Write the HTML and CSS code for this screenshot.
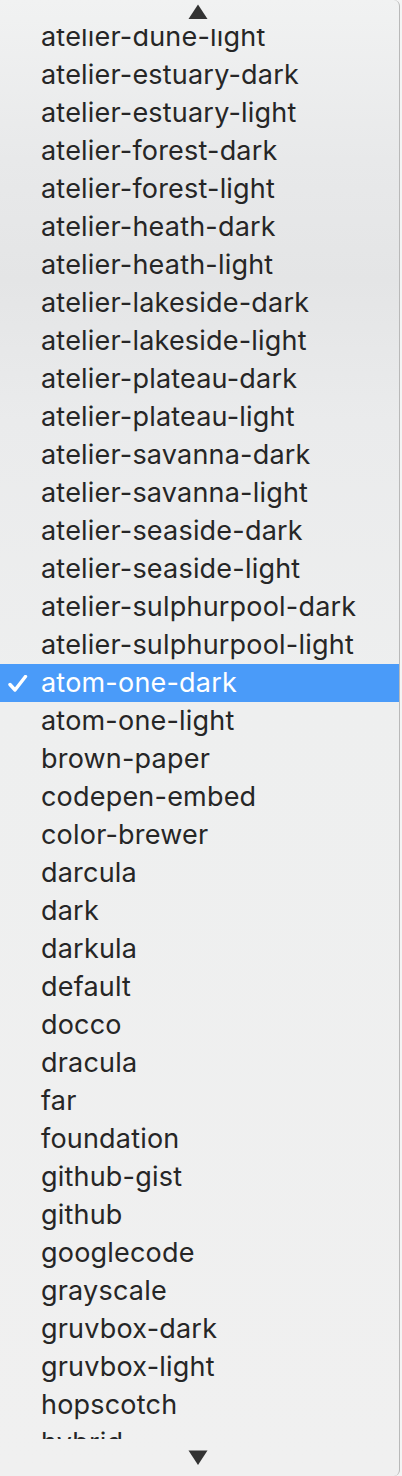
FILE: index.html
```html
<!DOCTYPE html>
<html>
<head>
<meta charset="utf-8">
<link rel="stylesheet" href="styles.css">
</head>
<body>
<div class="menu">
  <div class="scroll-arrow up">
    <svg width="20" height="16" viewBox="0 0 20 16"><polygon points="10,0.5 19.5,15 0.5,15" fill="#333"/></svg>
  </div>
  <div class="viewport">
    <ul class="items">
      <li>atelier-dune-light</li>
      <li>atelier-estuary-dark</li>
      <li>atelier-estuary-light</li>
      <li>atelier-forest-dark</li>
      <li>atelier-forest-light</li>
      <li>atelier-heath-dark</li>
      <li>atelier-heath-light</li>
      <li>atelier-lakeside-dark</li>
      <li>atelier-lakeside-light</li>
      <li>atelier-plateau-dark</li>
      <li>atelier-plateau-light</li>
      <li>atelier-savanna-dark</li>
      <li>atelier-savanna-light</li>
      <li>atelier-seaside-dark</li>
      <li>atelier-seaside-light</li>
      <li>atelier-sulphurpool-dark</li>
      <li>atelier-sulphurpool-light</li>
      <li class="selected"><svg class="check" width="20" height="18" viewBox="0 0 20 18"><polyline points="2,9.5 7,15 17.5,1.5" fill="none" stroke="#fff" stroke-width="3.4" stroke-linecap="round" stroke-linejoin="round"/></svg>atom-one-dark</li>
      <li>atom-one-light</li>
      <li>brown-paper</li>
      <li>codepen-embed</li>
      <li>color-brewer</li>
      <li>darcula</li>
      <li>dark</li>
      <li>darkula</li>
      <li>default</li>
      <li>docco</li>
      <li>dracula</li>
      <li>far</li>
      <li>foundation</li>
      <li>github-gist</li>
      <li>github</li>
      <li>googlecode</li>
      <li>grayscale</li>
      <li>gruvbox-dark</li>
      <li>gruvbox-light</li>
      <li>hopscotch</li>
      <li>hybrid</li>
    </ul>
  </div>
  <div class="scroll-arrow down">
    <svg width="20" height="16" viewBox="0 0 20 16"><polygon points="0.5,0.5 19.5,0.5 10,15" fill="#333"/></svg>
  </div>
</div>
</body>
</html>
```

FILE: styles.css
```css
html, body {
  margin: 0;
  padding: 0;
}
body {
  width: 402px;
  height: 1476px;
  background: #f4f4f4;
  overflow: hidden;
  font-family: Inter, "Liberation Sans", sans-serif;
}
.menu {
  width: 400px;
  height: 1476px;
  box-sizing: border-box;
  border-right: 1px solid #b9b9b9;
  border-radius: 0 6px 6px 0;
  background: linear-gradient(to bottom, #f1f2f2 0px, #e8e9ea 160px, #e4e5e6 280px, #eaebec 420px, #eeefef 700px, #f0f0f0 1476px);
  display: flex;
  flex-direction: column;
  overflow: hidden;
}
.scroll-arrow {
  display: flex;
  justify-content: center;
  flex: none;
  padding-right: 4px;
  box-sizing: border-box;
}
.scroll-arrow.up {
  height: 29px;
  padding-top: 4px;
}
.scroll-arrow.down {
  height: 37px;
  padding-top: 11px;
}
.viewport {
  height: 1410px;
  overflow: hidden;
  flex: none;
}
.items {
  list-style: none;
  margin: -11px 0 0 0;
  padding: 0;
}
.items li {
  height: 38px;
  line-height: 38px;
  padding-left: 41px;
  font-size: 27px;
  letter-spacing: 0.2px;
  color: #262626;
  white-space: nowrap;
  position: relative;
}
.items li.selected {
  background: #4a9bf9;
  color: #ffffff;
}
.check {
  position: absolute;
  left: 8px;
  top: 11px;
}
```
